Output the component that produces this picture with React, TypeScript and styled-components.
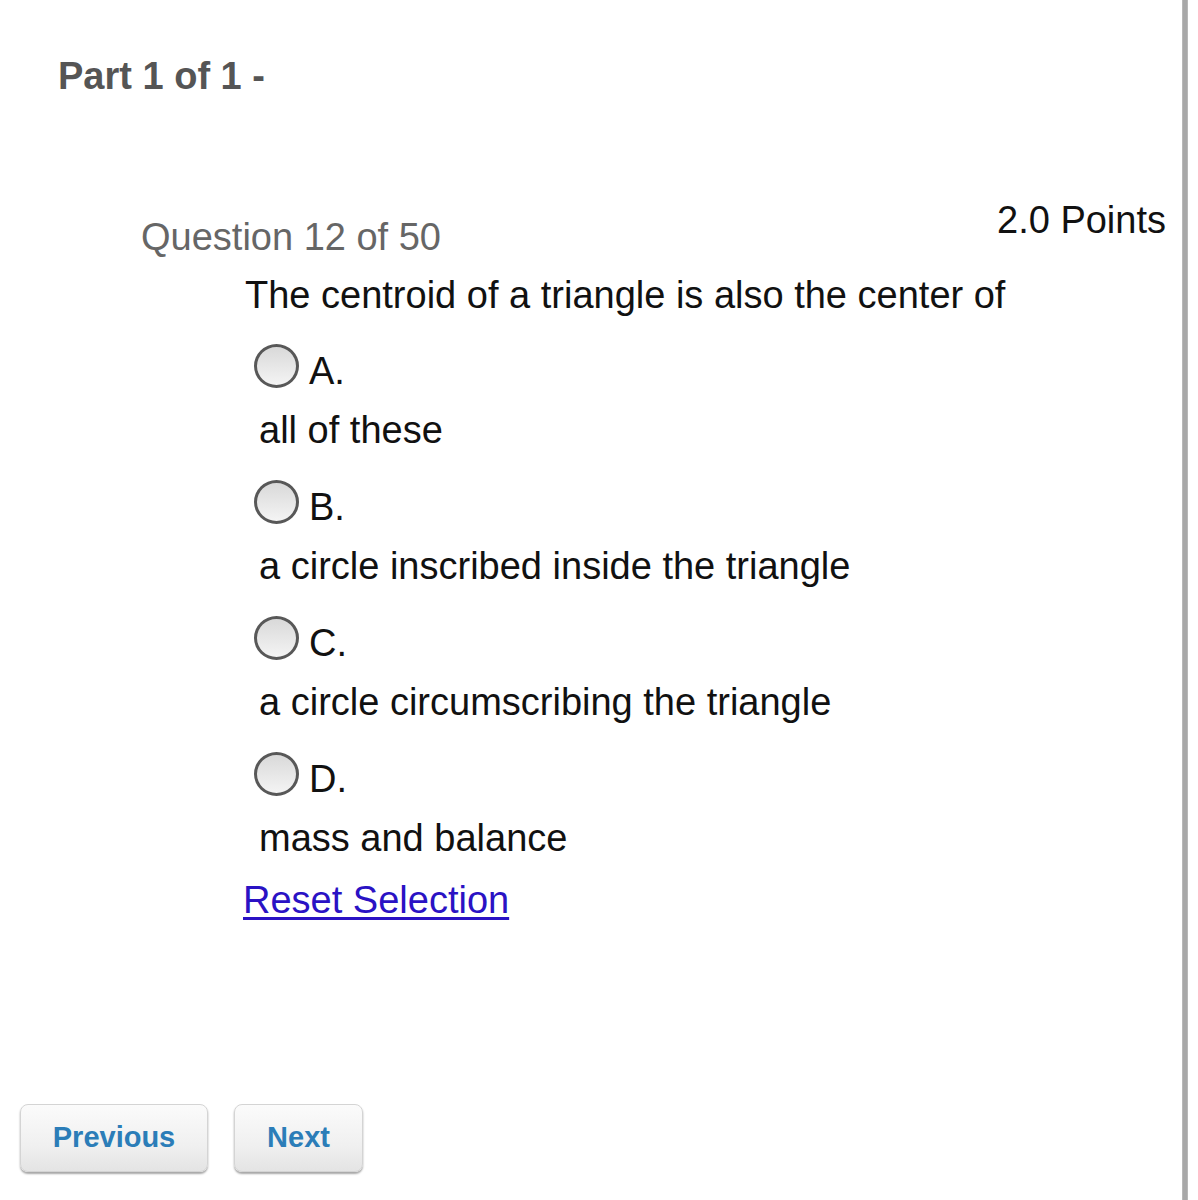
import React, { useState } from 'react';
import styled, { createGlobalStyle } from 'styled-components';

const GlobalStyle = createGlobalStyle`
  html, body {
    margin: 0;
    padding: 0;
    background: #ffffff;
  }
  body {
    font-family: "Liberation Sans", Arial, Helvetica, sans-serif;
    color: #111;
  }
`;

const Page = styled.div`
  display: flex;
  width: 1198px;
  height: 1200px;
  overflow: hidden;
  background: #fff;
`;

const Main = styled.div`
  width: 1182px;
  display: flex;
  flex-direction: column;
`;

const ScrollBar = styled.div`
  width: 6px;
  background: #a8a8a8;
  box-shadow: inset 1px 0 0 #b8b8b8, inset -1px 0 0 #b8b8b8;
`;

const Title = styled.h1`
  margin: 54px 0 0 58px;
  font-size: 38px;
  line-height: 44px;
  font-weight: bold;
  color: #555;
`;

const QuestionHeader = styled.div`
  display: flex;
  justify-content: space-between;
  align-items: flex-start;
  margin-top: 100px;
  padding: 0 16px 0 141px;
`;

const QuestionNumber = styled.div`
  margin-top: 17px;
  font-size: 38px;
  line-height: 44px;
  color: #666;
`;

const Points = styled.div`
  font-size: 38px;
  line-height: 44px;
  color: #111;
`;

const Prompt = styled.div`
  margin: 14px 0 0 245px;
  font-size: 38px;
  line-height: 44px;
  color: #111;
`;

const OptionList = styled.div`
  display: flex;
  flex-direction: column;
  gap: 28px;
  margin: 27px 0 0 254px;
`;

const Option = styled.label`
  display: flex;
  flex-direction: column;
  gap: 20px;
  cursor: pointer;
`;

const RadioRow = styled.div`
  display: flex;
  align-items: center;
  gap: 10px;
  height: 44px;
`;

const Radio = styled.span<{ checked: boolean }>`
  box-sizing: border-box;
  width: 45px;
  height: 44px;
  border-radius: 50%;
  border: 3px solid #585858;
  background: linear-gradient(180deg, #d9d9d9 0%, #f4f4f4 100%);
  display: flex;
  align-items: center;
  justify-content: center;

  &::after {
    content: '';
    display: ${p => (p.checked ? 'block' : 'none')};
    width: 16px;
    height: 16px;
    border-radius: 50%;
    background: #333;
  }
`;

const Letter = styled.span`
  margin-top: 10px;
  font-size: 38px;
  line-height: 44px;
  color: #111;
`;

const Answer = styled.div`
  padding-left: 5px;
  font-size: 38px;
  line-height: 44px;
  color: #111;
`;

const ResetLink = styled.a`
  margin: 18px 0 0 243px;
  align-self: flex-start;
  font-size: 38px;
  line-height: 44px;
  color: #2a12c4;
  text-decoration: underline;
  text-underline-offset: 4px;
  cursor: pointer;
`;

const Nav = styled.div`
  display: flex;
  gap: 26px;
  margin-top: auto;
  padding: 0 0 28px 20px;
`;

const NavButton = styled.button<{ wide?: boolean }>`
  box-sizing: border-box;
  width: ${p => (p.wide ? '188px' : '129px')};
  height: 68px;
  padding: 0 0 2px;
  border: 1px solid #d4d4d4;
  border-radius: 8px;
  background: linear-gradient(180deg, #fbfbfb 0%, #f0f0f0 60%, #e4e4e4 100%);
  box-shadow: 0 2px 2px rgba(0, 0, 0, 0.35);
  font-family: "Liberation Sans", Arial, Helvetica, sans-serif;
  font-size: 29px;
  font-weight: bold;
  color: #2b7db8;
  cursor: pointer;
`;

const options = [
  { letter: 'A.', text: 'all of these' },
  { letter: 'B.', text: 'a circle inscribed inside the triangle' },
  { letter: 'C.', text: 'a circle circumscribing the triangle' },
  { letter: 'D.', text: 'mass and balance' },
];

export default function App() {
  const [selected, setSelected] = useState<number | null>(null);

  return (
    <Page>
      <GlobalStyle />
      <Main>
        <Title>Part 1 of 1 -</Title>
        <QuestionHeader>
          <QuestionNumber>Question 12 of 50</QuestionNumber>
          <Points>2.0 Points</Points>
        </QuestionHeader>
        <Prompt>The centroid of a triangle is also the center of</Prompt>
        <OptionList>
          {options.map((o, i) => (
            <Option key={o.letter} onClick={() => setSelected(i)}>
              <RadioRow>
                <Radio checked={selected === i} />
                <Letter>{o.letter}</Letter>
              </RadioRow>
              <Answer>{o.text}</Answer>
            </Option>
          ))}
        </OptionList>
        <ResetLink onClick={() => setSelected(null)}>Reset Selection</ResetLink>
        <Nav>
          <NavButton wide>Previous</NavButton>
          <NavButton>Next</NavButton>
        </Nav>
      </Main>
      <ScrollBar />
    </Page>
  );
}
